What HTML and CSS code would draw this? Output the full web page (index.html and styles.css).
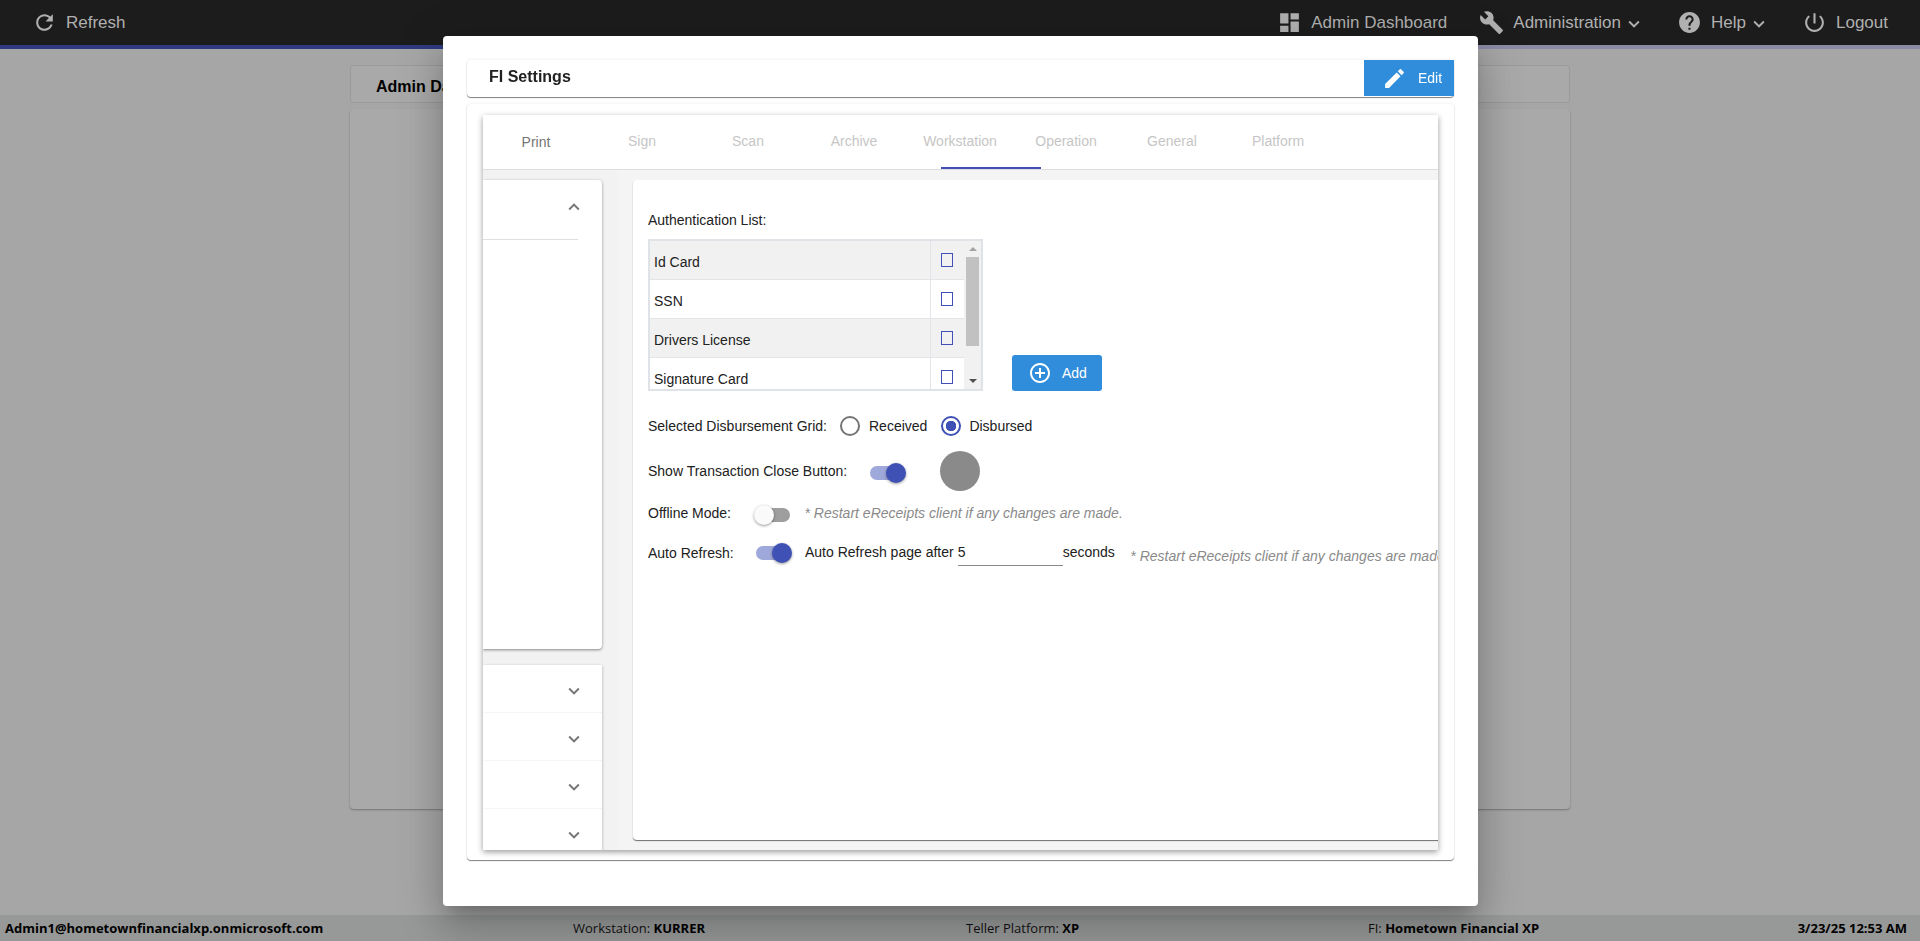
FILE: index.html
```html
<!DOCTYPE html>
<html lang="en">
<head>
<meta charset="utf-8">
<title>FI Settings</title>
<link rel="stylesheet" href="styles.css">
</head>
<body>
<header class="topbar">
  <div class="nav-item">
    <svg class="nav-icon" viewBox="0 0 24 24"><path d="M17.65 6.35C16.2 4.9 14.21 4 12 4c-4.42 0-7.99 3.58-7.99 8s3.57 8 7.99 8c3.73 0 6.84-2.55 7.73-6h-2.08c-.82 2.33-3.04 4-5.65 4-3.31 0-6-2.69-6-6s2.69-6 6-6c1.66 0 3.14.69 4.22 1.78L13 11h7V4l-2.35 2.35z"/></svg>
    <span>Refresh</span>
  </div>
  <nav class="nav-right">
    <div class="nav-item">
      <svg class="nav-icon" viewBox="0 0 24 24"><path d="M3 13h8V3H3v10zm0 8h8v-6H3v6zm10 0h8V11h-8v10zm0-18v6h8V3h-8z"/></svg>
      <span>Admin Dashboard</span>
    </div>
    <div class="nav-item">
      <svg class="nav-icon" viewBox="0 0 24 24"><path d="M22.7 19l-9.1-9.1c.9-2.3.4-5-1.5-6.9-2-2-5-2.4-7.4-1.3L9 6 6 9 1.6 4.7C.4 7.1.9 10.1 2.9 12.1c1.9 1.9 4.6 2.4 6.9 1.5l9.1 9.1c.4.4 1 .4 1.4 0l2.3-2.3c.5-.4.5-1.1.1-1.4z"/></svg>
      <span>Administration</span>
      <svg class="nav-caret" viewBox="0 0 24 24"><path d="M7.41 8.59L12 13.17l4.59-4.58L18 10l-6 6-6-6 1.41-1.41z"/></svg>
    </div>
    <div class="nav-item">
      <svg class="nav-icon" viewBox="0 0 24 24"><path d="M12 2C6.48 2 2 6.48 2 12s4.48 10 10 10 10-4.48 10-10S17.52 2 12 2zm1 17h-2v-2h2v2zm2.07-7.75l-.9.92C13.45 12.9 13 13.5 13 15h-2v-.5c0-1.1.45-2.1 1.17-2.83l1.24-1.26c.37-.36.59-.86.59-1.41 0-1.1-.9-2-2-2s-2 .9-2 2H8c0-2.21 1.79-4 4-4s4 1.79 4 4c0 .88-.36 1.68-.93 2.25z"/></svg>
      <span>Help</span>
      <svg class="nav-caret" viewBox="0 0 24 24"><path d="M7.41 8.59L12 13.17l4.59-4.58L18 10l-6 6-6-6 1.41-1.41z"/></svg>
    </div>
    <div class="nav-item">
      <svg class="nav-icon" viewBox="0 0 24 24"><path d="M13 3h-2v10h2V3zm4.83 2.17l-1.42 1.42C17.99 7.86 19 9.81 19 12c0 3.87-3.13 7-7 7s-7-3.13-7-7c0-2.19 1.01-4.14 2.58-5.42L6.17 5.17C4.23 6.82 3 9.26 3 12c0 4.97 4.03 9 9 9s9-4.03 9-9c0-2.74-1.23-5.18-3.17-6.83z"/></svg>
      <span>Logout</span>
    </div>
  </nav>
</header>
<div class="strip"></div>

<main class="page">
  <div class="page-title">Admin Dashboard</div>
  <div class="page-card"></div>
</main>

<footer class="statusbar">
  <div class="status-user">Admin1@hometownfinancialxp.onmicrosoft.com</div>
  <div>Workstation: <b>KURRER</b></div>
  <div>Teller Platform: <b>XP</b></div>
  <div>FI: <b>Hometown Financial XP</b></div>
  <div class="status-time">3/23/25 12:53 AM</div>
</footer>

<section class="modal">
  <div class="title-card">
    <h2 class="title">FI Settings</h2>
    <button class="btn btn-edit" type="button">
      <svg class="btn-icon-edit" viewBox="0 0 24 24"><path d="M3 17.25V21h3.75L17.81 9.94l-3.75-3.75L3 17.25zM20.71 7.04c.39-.39.39-1.02 0-1.41l-2.34-2.34c-.39-.39-1.02-.39-1.41 0l-1.83 1.83 3.75 3.75 1.83-1.83z"/></svg>
      <span>Edit</span>
    </button>
  </div>
  <div class="settings-card">
    <div class="settings-inner">
      <div class="tabs">
        <div class="tab tab-active">Print</div>
        <div class="tab">Sign</div>
        <div class="tab">Scan</div>
        <div class="tab">Archive</div>
        <div class="tab">Workstation</div>
        <div class="tab">Operation</div>
        <div class="tab">General</div>
        <div class="tab">Platform</div>
        <div class="tab-ink"></div>
      </div>
      <div class="settings-body">
        <aside class="side">
          <div class="side-open">
            <div class="side-head">
              <svg class="chev chev-up" viewBox="0 0 24 24"><path d="M7.41 8.59L12 13.17l4.59-4.58L18 10l-6 6-6-6 1.41-1.41z"/></svg>
            </div>
          </div>
          <div class="side-list">
            <div class="side-row"><svg class="chev" viewBox="0 0 24 24"><path d="M7.41 8.59L12 13.17l4.59-4.58L18 10l-6 6-6-6 1.41-1.41z"/></svg></div>
            <div class="side-row"><svg class="chev" viewBox="0 0 24 24"><path d="M7.41 8.59L12 13.17l4.59-4.58L18 10l-6 6-6-6 1.41-1.41z"/></svg></div>
            <div class="side-row"><svg class="chev" viewBox="0 0 24 24"><path d="M7.41 8.59L12 13.17l4.59-4.58L18 10l-6 6-6-6 1.41-1.41z"/></svg></div>
            <div class="side-row"><svg class="chev" viewBox="0 0 24 24"><path d="M7.41 8.59L12 13.17l4.59-4.58L18 10l-6 6-6-6 1.41-1.41z"/></svg></div>
          </div>
        </aside>
        <div class="main-area">
          <div class="panel">
            <div class="auth-label">Authentication List:</div>
            <div class="auth-row">
              <div class="grid">
                <div class="grid-rows">
                  <div class="grid-row grid-row-alt"><div class="grid-name">Id Card</div><div class="grid-check"><span class="check"></span></div></div>
                  <div class="grid-row"><div class="grid-name">SSN</div><div class="grid-check"><span class="check"></span></div></div>
                  <div class="grid-row grid-row-alt"><div class="grid-name">Drivers License</div><div class="grid-check"><span class="check"></span></div></div>
                  <div class="grid-row"><div class="grid-name">Signature Card</div><div class="grid-check"><span class="check"></span></div></div>
                </div>
                <div class="scrollbar">
                  <div class="scroll-btn"><span class="arrow-up"></span></div>
                  <div class="scroll-thumb"></div>
                  <div class="scroll-space"></div>
                  <div class="scroll-btn"><span class="arrow-down"></span></div>
                </div>
              </div>
              <button class="btn btn-add" type="button">
                <svg class="btn-icon-add" viewBox="0 0 24 24"><path d="M13 7h-2v4H7v2h4v4h2v-4h4v-2h-4V7zm-1-5C6.49 2 2 6.49 2 12s4.49 10 10 10 10-4.49 10-10S17.51 2 12 2zm0 18c-4.41 0-8-3.59-8-8s3.59-8 8-8 8 3.59 8 8-3.59 8-8 8z"/></svg>
                <span>Add</span>
              </button>
            </div>
            <div class="row row-radio">
              <div class="label-grid">Selected Disbursement Grid:</div>
              <span class="radio"></span><span class="radio-text">Received</span>
              <span class="radio radio-on"></span><span class="radio-text">Disbursed</span>
            </div>
            <div class="row row-show">
              <div class="label-show">Show Transaction Close Button:</div>
              <span class="toggle toggle-on"><span class="thumb"></span></span>
              <span class="gray-dot"></span>
            </div>
            <div class="row row-offline">
              <div class="label-short">Offline Mode:</div>
              <span class="toggle"><span class="thumb"></span></span>
              <span class="note note-offline">* Restart eReceipts client if any changes are made.</span>
            </div>
            <div class="row row-auto">
              <div class="label-short">Auto Refresh:</div>
              <span class="toggle toggle-on"><span class="thumb"></span></span>
              <span class="auto-text">Auto Refresh page after</span>
              <input class="seconds-input" type="text" value="5">
              <span class="seconds-text">seconds</span>
              <span class="note note-auto">* Restart eReceipts client if any changes are made.</span>
            </div>
          </div>
        </div>
      </div>
    </div>
  </div>
</section>
</body>
</html>
```
FILE: styles.css
```css
* { box-sizing: border-box; }
html, body { margin: 0; height: 941px; overflow: hidden; }
body {
  display: flex;
  flex-direction: column;
  background: #a6a6a6;
  font-family: "Liberation Sans", Arial, sans-serif;
  font-size: 14px;
  color: #212121;
}
svg { display: block; fill: currentColor; flex: none; }

/* top bar */
.topbar {
  height: 45px;
  flex: none;
  display: flex;
  align-items: center;
  justify-content: space-between;
  padding: 0 32px;
  background: #1c1c1c;
  color: #b0b0b0;
  font-size: 17px;
}
.nav-right { display: flex; gap: 32px; }
.nav-item { display: flex; align-items: center; gap: 9px; }
.nav-icon { width: 25px; height: 25px; }
.nav-caret { width: 22px; height: 22px; margin-left: -7px; margin-top: 2px; }
.strip {
  height: 4px;
  flex: none;
  background: linear-gradient(to right, #2f3a80 50%, #8a8ca6 50%);
}

/* dimmed page behind the dialog */
.page {
  flex: 1;
  display: flex;
  flex-direction: column;
  gap: 6px;
  width: 1220px;
  margin: 16px auto 106px;
}
.page-title {
  height: 38px;
  padding: 12px 25px 0;
  background: #a9a9a9;
  border: 1px solid #9a9a9a;
  border-radius: 4px;
  font-size: 16px;
  font-weight: 700;
  color: #000;
}
.page-card {
  flex: 1;
  background: #a9a9a9;
  border-radius: 4px;
  box-shadow: 0 1px 2px rgba(0,0,0,.3);
}

/* status bar */
.statusbar {
  height: 26px;
  flex: none;
  display: grid;
  grid-template-columns: 568px 393px 402px 1fr auto;
  align-items: center;
  padding: 0 13px 0 5px;
  background: #979898;
  font-family: "Open Sans", sans-serif;
  font-size: 13px;
  color: #111;
}
.statusbar b { color: #000; }
.status-user, .status-time { font-weight: 700; color: #000; }

/* dialog */
.modal {
  position: fixed;
  left: 443px;
  top: 36px;
  width: 1035px;
  height: 870px;
  padding: 24px 24px 46px;
  background: #fff;
  border-radius: 4px;
  box-shadow: 0 11px 15px -7px rgba(0,0,0,.2), 0 24px 38px 3px rgba(0,0,0,.14), 0 9px 46px 8px rgba(0,0,0,.12);
  display: flex;
  flex-direction: column;
}
.title-card {
  height: 37px;
  flex: none;
  display: flex;
  justify-content: space-between;
  align-items: flex-start;
  border-radius: 4px;
  box-shadow: 0 1px 1px rgba(0,0,0,.5), 0 -1px 3px rgba(0,0,0,.05);
}
.title {
  margin: 0;
  padding-left: 22px;
  font-size: 16px;
  line-height: 34px;
  font-weight: 700;
  color: #212121;
}
.btn {
  display: flex;
  align-items: center;
  border: 0;
  background: #2f8ddc;
  color: #fff;
  font-family: inherit;
  font-size: 14px;
  padding: 0;
}
.btn-edit { width: 90px; height: 36px; padding-left: 18px; gap: 11px; }
.btn-icon-edit { width: 25px; height: 25px; }
.btn-add { width: 90px; height: 36px; padding-left: 16px; gap: 10px; border-radius: 3px; }
.btn-icon-add { width: 24px; height: 24px; }

.settings-card {
  height: 756px;
  flex: none;
  margin-top: 7px;
  padding: 11px 16px 10px;
  border-radius: 4px;
  box-shadow: 0 1px 1px rgba(0,0,0,.5), 0 -1px 3px rgba(0,0,0,.05);
}
.settings-inner {
  height: 735px;
  display: flex;
  flex-direction: column;
  box-shadow: 0 2px 6px rgba(0,0,0,.4);
}
.tabs {
  position: relative;
  height: 55px;
  flex: none;
  display: flex;
  border-bottom: 1px solid #dedede;
  background: #fff;
}
.tab {
  width: 106px;
  display: flex;
  align-items: center;
  justify-content: center;
  padding-bottom: 2px;
  color: #c6c6c6;
  font-size: 14px;
}
.tab-active { padding-bottom: 0; color: #757575; }
.tab-ink {
  position: absolute;
  left: 458px;
  bottom: 0;
  width: 100px;
  height: 2px;
  background: #3f51b5;
}
.settings-body {
  flex: 1;
  min-height: 0;
  display: flex;
  overflow: hidden;
}
.side {
  width: 134px;
  flex: none;
  padding: 10px 15px 0 0;
  background: #f2f2f2;
}
.side-open {
  height: 469px;
  background: #fff;
  border-radius: 0 4px 4px 0;
  box-shadow: 0 1px 3px rgba(0,0,0,.45);
}
.side-head {
  height: 60px;
  width: 95px;
  display: flex;
  justify-content: flex-end;
  align-items: center;
  border-bottom: 1px solid #e0e0e0;
  padding-bottom: 5px;
  margin-right: 0;
}
.chev { width: 22px; height: 22px; color: #757575; }
.chev-up { transform: rotate(180deg); margin-right: -7px; }
.side-list {
  margin-top: 16px;
  background: #fff;
  box-shadow: 0 1px 3px rgba(0,0,0,.3);
}
.side-row {
  height: 48px;
  padding-left: 80px;
  padding-top: 15px;
  border-bottom: 1px solid #f5f5f5;
}
.main-area {
  flex: 1;
  min-width: 0;
  padding: 10px 0 10px 16px;
  background: #f4f4f4;
}
.panel {
  width: 900px;
  height: 660px;
  padding: 30px 0 0 15px;
  background: #fff;
  border-radius: 4px 0 0 4px;
  box-shadow: 0 1px 1px rgba(0,0,0,.55);
}
.auth-label { height: 20px; line-height: 20px; }
.auth-row {
  display: flex;
  align-items: flex-end;
  gap: 29px;
  margin-top: 9px;
}
.grid {
  width: 335px;
  height: 152px;
  display: flex;
  border: 2px solid #dfe2e6;
  border-bottom-width: 2px;
  overflow: hidden;
}
.grid-rows { width: 314px; flex: none; }
.grid-row {
  height: 39px;
  display: flex;
  border-bottom: 1px solid #e2e4e8;
  background: #fff;
}
.grid-row-alt { background: #f1f1f1; }
.grid-name {
  width: 280px;
  padding: 12px 0 0 4px;
  line-height: 18px;
  color: #212121;
}
.grid-check {
  flex: 1;
  border-left: 1px solid #e2e4e8;
  padding: 12px 0 0 10px;
}
.check {
  display: block;
  width: 12px;
  height: 14px;
  border: 1px solid #3f51b5;
  background: transparent;
}
.scrollbar {
  flex: 1;
  display: flex;
  flex-direction: column;
  align-items: center;
  background: #f1f1f1;
}
.scroll-btn {
  height: 16px;
  flex: none;
  display: flex;
  align-items: center;
  justify-content: center;
}
.scroll-thumb { width: 13px; height: 89px; flex: none; background: #c1c1c1; }
.scroll-space { flex: 1; }
.arrow-up, .arrow-down {
  width: 0;
  height: 0;
  border-left: 4px solid transparent;
  border-right: 4px solid transparent;
}
.arrow-up { border-bottom: 4px solid #a3a3a3; }
.arrow-down { border-top: 4px solid #505050; }

.row { display: flex; align-items: center; }
.row-radio { height: 20px; margin-top: 25px; }
.label-grid { width: 192px; }
.radio {
  width: 20px;
  height: 20px;
  flex: none;
  border: 2px solid #757575;
  border-radius: 50%;
  background: #fff;
}
.radio-on {
  border-color: #3f51b5;
  background: radial-gradient(circle, #3f51b5 0 5px, #fff 5.5px);
}
.radio-text { margin: 0 14px 0 9px; }
.radio-on + .radio-text { margin-left: 8px; }

.toggle {
  position: relative;
  width: 34px;
  height: 14px;
  flex: none;
  border-radius: 7px;
  background: #9e9e9e;
}
.toggle-on { background: #9fa8da; }
.thumb {
  position: absolute;
  left: -2px;
  top: -3px;
  width: 20px;
  height: 20px;
  border-radius: 50%;
  background: #fafafa;
  box-shadow: 0 1px 3px rgba(0,0,0,.4);
}
.toggle-on .thumb { left: auto; right: -2px; background: #3f51b5; }

.row-show { height: 40px; margin-top: 15px; }
.label-show { width: 221.5px; }
.row-show .toggle { margin-top: 4px; }
.gray-dot {
  width: 40px;
  height: 40px;
  flex: none;
  margin-left: 36.5px;
  border-radius: 50%;
  background: #8a8a8a;
}
.row-offline { height: 24px; margin-top: 10px; }
.row-offline .toggle { margin-top: 4px; }
.label-short { width: 107.5px; }
.note { font-style: italic; color: #8a8a8a; white-space: nowrap; }
.note-offline { margin-left: 15px; }
.row-auto { height: 26px; margin-top: 15px; }
.auto-text { margin: -2px 4px 0 15.5px; white-space: nowrap; }
.seconds-input {
  width: 105px;
  height: 26px;
  padding: 0 0 2px;
  border: 0;
  border-bottom: 1px solid #8a8a8a;
  background: transparent;
  font: inherit;
  color: #212121;
  outline: none;
}
.seconds-text { margin-top: -2px; }
.note-auto { margin: 6px 0 0 15.5px; }
```
